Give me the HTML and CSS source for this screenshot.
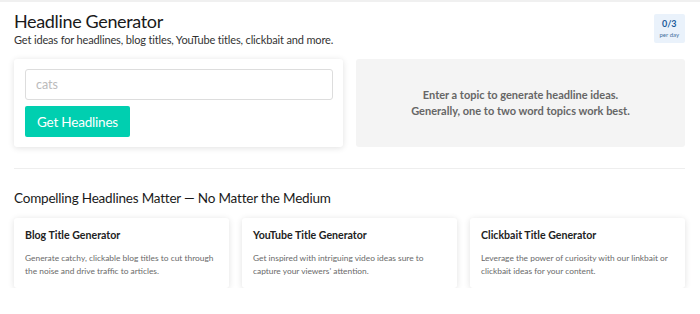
FILE: index.html
```html
<!DOCTYPE html>
<html lang="en">
<head>
    <meta charset="UTF-8">
    <meta name="viewport" content="width=device-width, initial-scale=1.0">
    <title>Headline Generator</title>
    <link rel="stylesheet" href="styles.css">
</head>
<body>

<div class="page">
    <header class="top">
        <div>
            <h1>Headline Generator</h1>
            <p class="subtitle">Get ideas for headlines, blog titles, YouTube titles, clickbait and more.</p>
        </div>
        <div class="quota">
            <span class="quota-count">0/3</span>
            <span class="quota-label">per day</span>
        </div>
    </header>

    <div class="tool">
        <div class="search-card">
            <input type="text" class="topic-input" placeholder="cats">
            <button class="get-button">Get Headlines</button>
        </div>
        <div class="results">
            <p>Enter a topic to generate headline ideas.<br>Generally, one to two word topics work best.</p>
        </div>
    </div>

    <hr class="divider">

    <h2>Compelling Headlines Matter — No Matter the Medium</h2>
    <div class="cards">
        <div class="card">
            <h3>Blog Title Generator</h3>
            <p>Generate catchy, clickable blog titles to cut through the noise and drive traffic to articles.</p>
        </div>
        <div class="card">
            <h3>YouTube Title Generator</h3>
            <p>Get inspired with intriguing video ideas sure to capture your viewers' attention.</p>
        </div>
        <div class="card">
            <h3>Clickbait Title Generator</h3>
            <p>Leverage the power of curiosity with our linkbait or clickbait ideas for your content.</p>
        </div>
    </div>
</div>

</body>
</html>
```

FILE: styles.css
```css
body { font-family: Lato, "Noto Sans", sans-serif; margin: 0; padding: 0; background-color: white; color: #222; border-top: 2px solid #f0f0f0; }
.page { padding: 8px 15px 0 14px; }
.top { display: flex; justify-content: space-between; align-items: flex-start; }
h1 { font-size: 18px; font-weight: 400; margin: 0; line-height: 22px; color: #1a1a1a; letter-spacing: -0.35px; }
.subtitle { font-size: 11px; margin: 0; color: #333; line-height: 15px; letter-spacing: -0.15px; }
.quota { background-color: #eaf2fb; display: flex; flex-direction: column; align-items: center; padding: 4px 6px 4px; margin-top: 4px; border-radius: 2px; }
.quota-count { font-size: 9px; font-weight: 700; color: #1b5a99; line-height: 12px; }
.quota-label { font-size: 6px; color: #3f6e9c; line-height: 9px; }
.tool { display: grid; grid-template-columns: 1fr 1fr; gap: 13px; margin-top: 12px; }
.search-card { min-width: 0; background-color: white; box-shadow: 0 1px 6px rgba(0,0,0,0.12); border-radius: 3px; padding: 10px 10px 10px 11px; display: flex; flex-direction: column; align-items: flex-start; gap: 6px; }
.topic-input { width: 100%; box-sizing: border-box; height: 31px; padding: 0 10px; font-family: inherit; font-size: 12.5px; border: 1px solid #ddd; border-radius: 3px; color: #333; }
.topic-input::placeholder { color: #bbb; }
.get-button { background-color: #00cfb0; border: none; color: white; font-family: inherit; font-size: 13.5px; height: 31px; padding: 0 12px; border-radius: 2px; cursor: pointer; letter-spacing: -0.2px; }
.results { min-width: 0; background-color: #f4f4f4; border-radius: 3px; display: flex; align-items: center; justify-content: center; min-height: 88px; }
.results p { margin: 0; font-size: 11px; font-weight: 700; color: #666; text-align: center; line-height: 16px; }
.divider { border: none; border-top: 1px solid #eee; margin: 21px 0 0 0; }
h2 { font-size: 13.5px; font-weight: 400; margin: 20px 0 0 0; line-height: 18px; color: #1a1a1a; letter-spacing: -0.2px; }
.cards { display: grid; grid-template-columns: repeat(3, 1fr); gap: 13px; margin-top: 11px; }
.card { background-color: white; box-shadow: 0 1px 6px rgba(0,0,0,0.12); border-radius: 3px; padding: 10px 11px 10px 11px; }
.card h3 { font-size: 10.6px; font-weight: 700; margin: 0; line-height: 14px; color: #222; }
.card p { font-size: 8.4px; color: #6a6a6a; margin: 10px 0 0 0; line-height: 13px; }
```
